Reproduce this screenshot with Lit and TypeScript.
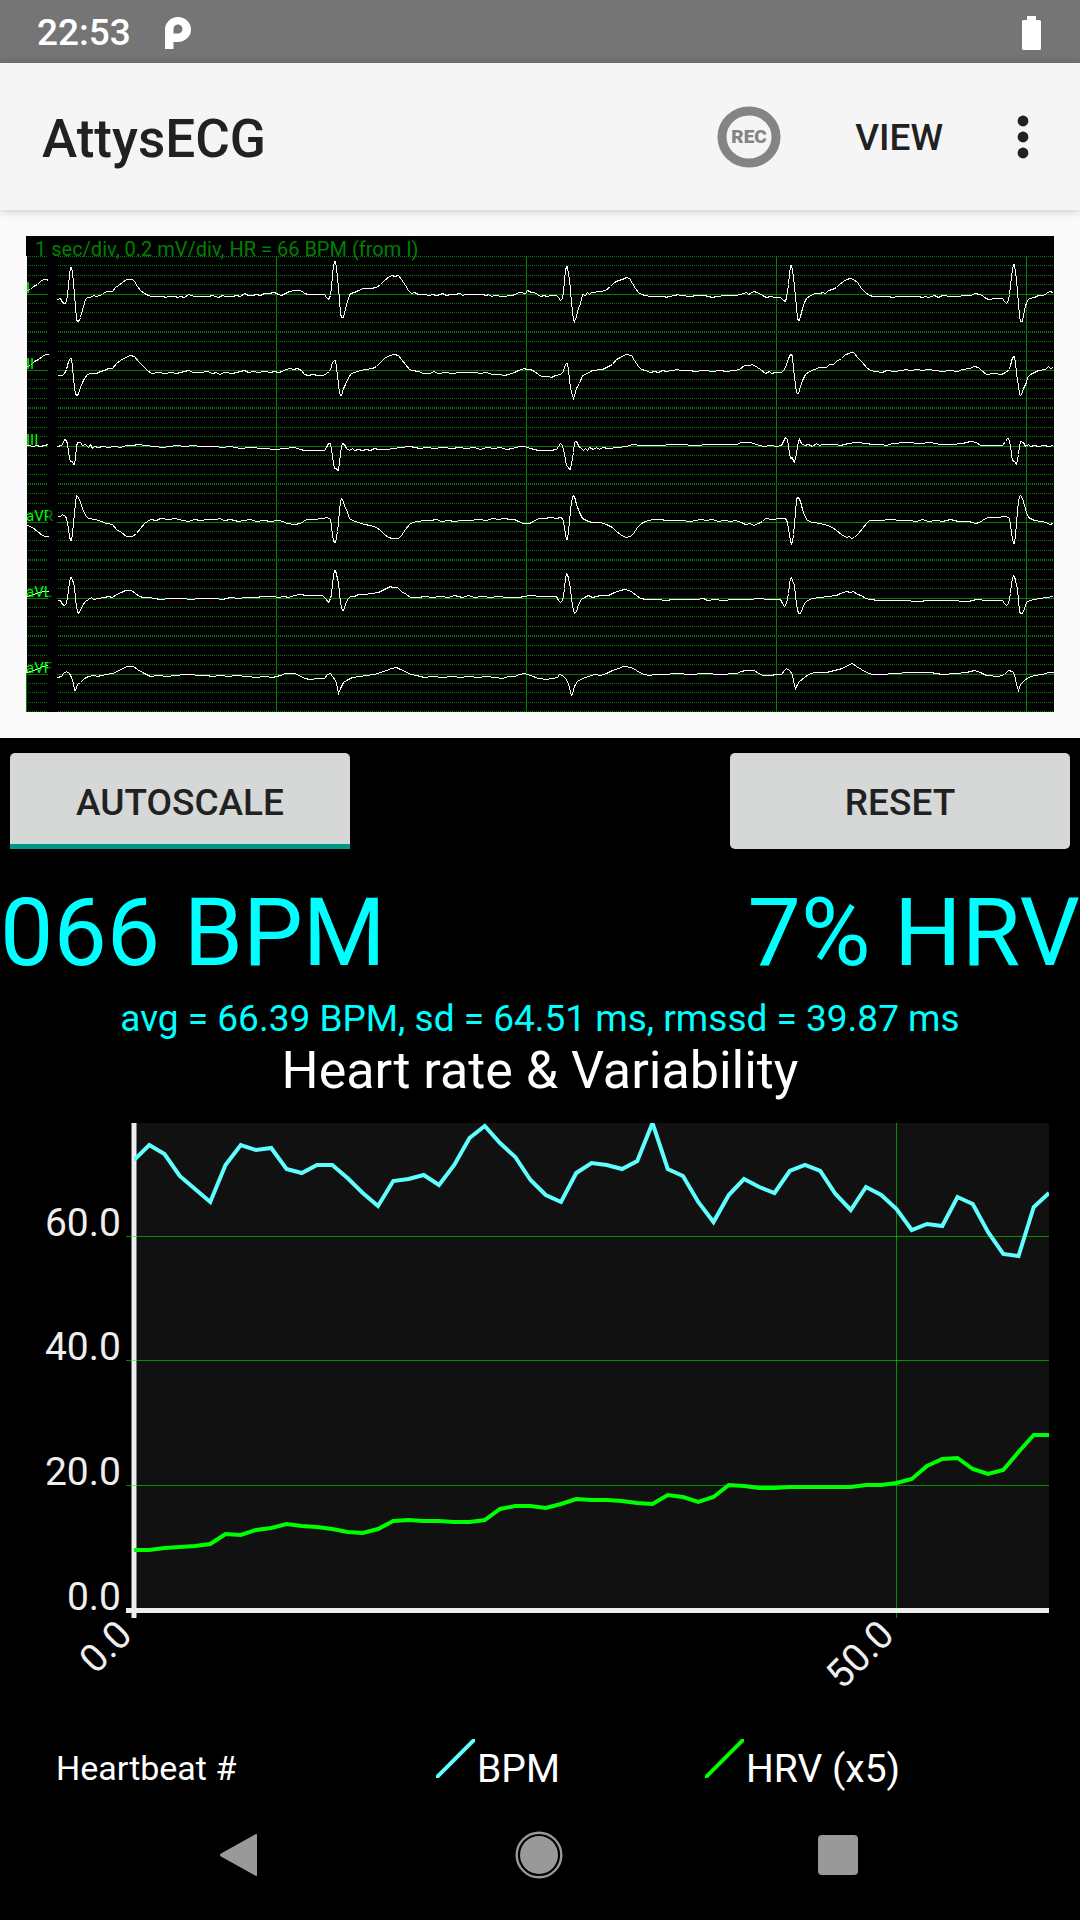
import { LitElement, html, svg, css } from "lit";
import { customElement, property, state } from "lit/decorators.js";

interface Lead {
  name: string;
  /** Sweeps separated by "|"; each point is "x height-above-baseline". */
  trace: string;
}

const LEADS: Lead[] = [
  {
    name: "I",
    trace:
      "27 4,30 5,33 8,37 10,40 13,43 15,46 15,48 14|57 -5,60 -4,62 -8,64 -9,66 -8,67 0,68 9,69 20,70 27,71 27,72 22,73 12,74 0,75 -12,76 -25,77 -27,79 -26,80 -23,81 -19,83 -12,85 -5,87 -3,90 -3,93 -1,96 -2,99 -1,102 0,104 2,107 3,112 3,115 7,118 9,122 12,126 15,132 15,134 13,137 8,140 4,144 1,148 -1,151 -2,163 -2,165 -3,168 -2,175 -2,177 -3,180 -2,184 -3,188 0,194 -2,208 -2,212 -1,218 -3,222 -1,225 -2,232 -2,236 -1,240 -2,244 1,248 -1,252 -1,256 0,260 -1,264 1,268 1,274 2,276 1,278 0,281 -1,285 1,289 3,294 4,299 4,302 3,304 1,308 0,324 0,326 -3,328 -5,330 -1,331 7,332 20,333 28,334 33,335 33,336 27,338 7,339 -6,340 -19,341 -23,343 -23,345 -14,347 -7,349 -1,350 1,354 2,358 4,363 6,370 6,376 7,380 10,384 14,389 18,392 19,394 18,398 19,401 15,405 9,408 4,411 1,414 2,418 0,424 0,429 -1,432 0,436 -1,440 0,442 1,446 -1,450 0,454 0,460 1,462 -1,465 0,482 0,486 -1,488 0,491 -2,494 -1,502 -2,512 -1,514 0,519 2,525 1,527 4,531 2,534 2,537 0,540 -2,544 -1,546 -2,552 -1,556 -1,558 -3,560 -6,562 -4,563 3,564 14,565 24,566 28,567 28,568 20,569 16,570 3,571 -8,572 -17,573 -25,574 -27,576 -22,578 -14,580 -9,582 0,585 -1,587 2,589 0,591 2,600 3,605 4,610 8,614 12,618 14,622 15,626 17,629 16,632 11,635 6,638 2,641 0,645 -1,650 -2,664 -2,666 -3,668 -2,675 -1,677 0,680 -1,690 -2,696 -1,704 -1,712 -3,716 -2,726 -1,735 -1,740 0,743 1,746 2,748 0,750 1,753 3,757 2,762 -1,766 -3,770 -2,775 -3,780 -3,783 -6,785 -7,786 -3,787 3,788 10,789 20,790 29,791 29,792 24,793 18,794 8,795 -2,796 -12,797 -24,798 -26,799 -26,800 -22,802 -14,804 -8,806 -4,810 -1,815 1,820 1,822 2,825 1,828 4,832 5,836 7,839 10,843 13,846 15,850 16,853 15,857 12,861 6,865 2,869 -1,873 -2,888 -2,892 -3,898 -2,918 -2,922 -3,925 -2,928 -3,934 -1,938 -3,942 -1,950 -2,958 -2,963 -1,970 -1,975 1,979 0,982 -1,984 -3,988 -5,995 -4,1002 -4,1004 -7,1006 -9,1008 -6,1009 0,1010 9,1011 18,1012 25,1013 30,1014 30,1015 22,1016 15,1017 3,1018 -10,1019 -21,1020 -27,1022 -27,1023 -21,1025 -11,1026 -9,1027 -6,1029 -4,1034 -3,1038 -1,1043 -1,1046 1,1049 3,1053 2",
  },
  {
    name: "II",
    trace:
      "27 4,30 5,34 9,38 11,42 14,45 16,48 16|57 -5,62 -5,64 -3,66 1,67 5,68 9,70 12,71 12,72 3,73 -8,74 -17,75 -23,76 -25,77 -25,78 -23,80 -17,82 -12,84 -8,87 -4,90 -3,96 -3,100 -1,104 0,108 2,112 2,116 7,120 10,125 13,130 15,134 14,138 9,143 4,147 0,151 -3,158 -2,165 -3,170 -2,176 -3,180 -2,184 -1,188 0,193 -2,200 -2,207 -1,212 -3,216 -2,219 -4,224 -2,232 -3,240 -1,244 0,248 -2,253 -1,258 -2,264 -1,270 -2,274 -1,278 -2,282 -1,285 1,290 2,293 1,297 2,301 0,304 -4,308 -5,312 -4,318 -5,323 -5,326 -3,329 -1,331 4,332 8,334 10,335 10,336 3,337 -5,338 -14,339 -22,340 -25,341 -25,343 -18,345 -14,348 -7,351 -3,357 -1,360 0,366 1,372 2,376 4,380 8,384 12,389 15,394 16,398 15,401 11,405 6,409 1,412 0,418 -1,423 -3,430 -3,433 -1,438 -3,445 -2,452 -3,460 -2,474 -2,480 -3,486 -2,492 -4,498 -4,504 -5,508 -4,514 -2,518 0,524 2,526 1,530 1,534 -1,538 -4,541 -6,548 -6,551 -7,555 -5,560 -4,563 -1,564 4,566 7,567 7,568 0,569 -8,570 -18,572 -25,573 -28,574 -25,576 -18,579 -13,582 -5,587 -3,592 0,602 1,606 3,612 6,616 11,620 13,625 16,631 15,634 10,638 4,641 1,645 0,650 -2,654 -1,658 -2,662 0,666 -1,672 0,677 1,680 0,690 0,694 -1,704 0,712 -1,720 0,726 -1,734 0,739 1,744 5,749 5,752 6,757 3,760 1,765 -3,769 -1,771 -3,775 -2,781 -2,784 1,786 6,788 12,790 16,791 16,792 14,793 2,794 -6,795 -15,796 -22,797 -23,798 -23,800 -16,802 -10,805 -4,809 -1,814 1,819 3,826 3,829 6,833 6,836 9,841 12,845 16,849 17,850 18,853 18,858 12,862 8,866 3,870 0,875 -1,882 -2,886 0,894 -1,902 0,905 1,910 0,917 1,922 0,928 1,934 0,942 -1,950 0,957 -1,962 1,969 2,974 4,978 3,981 0,986 -4,994 -3,1001 -4,1005 -2,1009 1,1010 5,1012 13,1014 14,1015 8,1016 -3,1018 -15,1019 -24,1020 -25,1021 -24,1023 -18,1026 -12,1027 -7,1030 -4,1034 -2,1038 0,1045 1,1048 4,1050 2,1053 3",
  },
  {
    name: "III",
    trace:
      "27 1,33 0,36 1,40 0,44 1,48 2|57 0,61 1,63 4,64 7,66 6,67 2,68 -5,69 -12,70 -15,72 -15,73 -18,74 -18,75 -12,76 0,77 4,80 4,82 1,85 2,88 -1,90 2,92 -2,94 0,98 -1,102 0,108 -1,114 0,120 -1,126 1,132 1,138 2,145 1,154 0,162 -1,170 0,176 1,185 0,192 1,200 0,214 0,222 -1,230 0,240 -2,250 -1,262 -2,276 -3,284 -2,294 -1,300 -3,304 -4,324 -4,326 -1,328 3,330 3,331 -4,332 -9,333 -17,334 -22,336 -22,337 -24,338 -24,339 -16,340 -8,341 0,342 3,344 2,346 -2,349 -4,352 -2,354 -4,358 -3,362 -4,366 -3,370 -4,374 -2,378 -3,386 -3,394 -2,400 -1,410 0,414 -1,420 -2,426 -1,434 -2,442 -1,452 -2,458 -1,466 -2,474 -1,480 -3,486 -1,494 -2,500 -1,506 -3,512 -2,519 0,524 0,530 -2,538 -4,550 -4,556 -3,558 0,560 3,562 1,564 -8,566 -19,568 -21,569 -23,570 -23,571 -17,573 -6,574 4,575 5,577 4,578 0,580 -1,583 -4,585 -2,587 -4,589 -1,593 -3,596 -1,599 -3,602 -1,608 -2,618 -1,626 0,632 2,640 1,662 1,670 2,680 2,694 1,710 2,736 2,741 4,750 4,756 2,763 0,770 1,776 0,781 1,783 5,785 9,787 7,788 0,789 -6,790 -12,792 -11,793 -15,794 -16,795 -12,796 -7,797 0,798 5,799 7,801 3,804 1,808 2,812 0,816 3,819 1,822 2,834 2,840 1,848 3,856 4,866 3,872 2,880 2,886 1,892 3,906 4,920 3,930 4,940 2,952 2,962 3,970 5,976 4,980 1,1002 1,1005 5,1007 8,1008 8,1010 1,1011 -8,1012 -14,1014 -15,1016 -18,1017 -14,1018 -8,1019 0,1020 5,1023 4,1025 0,1028 2,1030 0,1034 1,1038 0,1044 1,1048 0,1053 1",
  },
  {
    name: "aVR",
    trace:
      "27 -3,32 -5,37 -9,42 -13,45 -14,48 -14|57 6,60 6,62 8,65 6,66 4,67 0,68 -7,69 -14,70 -18,71 -18,72 -12,73 0,74 9,75 19,76 27,77 26,79 23,80 20,82 14,85 7,88 4,95 3,101 1,106 -1,112 -2,116 -7,121 -10,126 -14,132 -14,136 -11,140 -6,144 -1,150 3,156 2,160 4,168 3,175 4,182 2,188 1,194 3,200 2,208 3,216 3,219 4,224 2,230 3,238 1,244 2,250 3,256 1,264 2,270 1,278 2,283 1,286 -1,294 -2,300 -1,303 1,306 3,314 3,322 4,327 5,330 3,331 -4,332 -12,333 -18,334 -20,335 -20,337 -9,338 0,339 12,340 21,341 24,342 23,344 17,347 10,349 4,352 2,358 0,364 -2,370 -3,376 -5,380 -8,384 -12,388 -15,392 -16,398 -16,401 -13,405 -7,409 -2,412 0,418 1,423 2,430 2,436 3,441 1,448 2,454 1,462 2,470 2,478 3,486 2,492 4,498 3,504 4,510 3,514 3,518 1,523 -1,529 -1,533 1,538 4,544 4,550 5,556 4,560 5,562 4,563 1,564 -5,565 -12,566 -17,567 -17,568 -8,569 0,570 12,571 20,572 25,573 27,574 26,576 18,579 10,582 4,588 1,592 0,600 0,606 -2,612 -5,616 -9,620 -12,625 -15,630 -14,633 -11,637 -5,641 -1,645 1,652 3,660 3,666 2,680 2,690 1,700 3,706 2,712 3,718 1,724 2,730 1,735 2,741 0,745 -2,750 -1,753 -3,758 -1,762 1,765 4,772 3,780 4,785 4,787 0,788 -6,789 -12,790 -19,791 -21,792 -19,793 -12,794 -2,795 10,796 23,797 25,798 25,800 21,802 13,804 7,807 2,812 0,820 -1,827 -3,832 -5,836 -8,841 -12,846 -15,849 -14,851 -16,854 -15,858 -11,862 -6,866 -1,869 2,880 2,890 3,900 2,908 2,916 1,922 3,928 1,936 2,942 1,950 3,958 1,968 1,972 0,975 -1,979 0,982 2,987 5,996 5,1006 6,1009 4,1010 -2,1011 -10,1012 -16,1013 -21,1014 -21,1015 -12,1016 -2,1017 12,1018 20,1019 26,1020 27,1022 24,1024 17,1026 10,1028 5,1034 2,1040 1,1046 0,1049 -2,1053 -1",
  },
  {
    name: "aVL",
    trace:
      "27 2,33 4,39 6,44 7,48 7|57 -2,60 -2,62 -6,64 -7,66 -5,67 1,68 8,69 16,70 21,71 21,72 18,73 16,74 11,75 0,76 -8,77 -13,78 -15,80 -12,82 -7,85 -3,88 -1,91 1,93 -1,98 0,104 1,108 2,112 1,116 4,121 6,125 8,131 8,135 5,139 2,143 1,148 1,154 0,160 -1,170 0,182 0,190 -1,200 0,214 0,222 -1,230 1,238 0,246 1,256 1,262 2,272 2,278 1,284 2,288 1,294 3,300 4,306 3,322 3,325 0,328 -4,330 0,331 4,332 15,333 22,334 28,335 28,336 24,337 20,338 16,339 5,340 -3,341 -9,342 -12,343 -12,345 -6,347 -1,350 2,354 2,358 4,364 4,372 5,378 6,382 8,386 10,390 12,392 11,397 11,401 7,406 4,410 1,418 1,424 2,432 1,440 2,448 1,454 3,462 1,468 3,474 1,482 2,490 1,498 2,506 1,518 1,524 2,530 3,540 2,556 2,558 -2,560 -4,562 -2,563 3,564 10,565 20,566 25,567 24,568 20,569 16,570 10,571 0,572 -7,573 -12,574 -15,576 -13,578 -6,581 -1,584 1,588 3,592 1,600 3,608 3,614 6,620 8,624 9,629 8,632 6,636 3,640 0,646 -1,656 -1,666 -2,672 -1,696 -1,703 0,707 -2,714 -1,722 -2,734 -1,750 -1,758 0,768 -1,780 -1,782 -5,784 -8,786 -5,787 -1,788 5,789 14,790 20,791 21,792 18,794 13,795 3,796 -5,797 -11,798 -15,800 -15,802 -10,804 -5,807 -2,812 0,820 1,828 2,836 3,840 5,846 7,850 6,853 7,857 4,861 3,865 0,870 -1,878 -2,900 -2,920 -3,926 -2,948 -2,968 -3,976 -1,986 -2,1002 -2,1004 -5,1006 -7,1008 -5,1009 0,1010 5,1011 15,1012 20,1013 23,1014 22,1015 18,1017 10,1018 -2,1019 -13,1020 -15,1022 -15,1024 -10,1026 -4,1029 -2,1034 -1,1040 0,1046 1,1053 2",
  },
  {
    name: "aVF",
    trace:
      "27 2,33 4,38 6,43 8,48 9|57 -3,61 -2,63 1,66 3,69 1,71 -3,73 -9,74 -16,75 -16,77 -10,80 -8,84 -4,88 -2,94 -1,97 -2,101 -1,106 0,112 1,117 3,122 6,127 8,133 8,137 5,142 2,146 0,150 -2,158 -1,166 -2,176 -1,184 0,190 0,198 -1,206 -1,212 -2,220 -1,228 -2,236 -1,246 -2,256 -3,264 -2,272 -3,280 -1,285 1,294 1,299 -1,304 -4,310 -5,318 -4,324 -4,327 0,330 1,332 -2,335 -6,337 -13,338 -19,340 -14,343 -8,348 -5,352 -3,360 -2,366 -1,374 0,380 2,386 4,391 6,396 7,400 5,405 3,410 0,416 -1,424 -3,432 -2,442 -3,452 -2,460 -3,468 -2,478 -3,486 -2,494 -3,502 -4,508 -2,514 -2,519 0,524 1,530 -1,538 -4,546 -5,552 -4,557 -3,559 0,562 -1,565 -4,568 -9,570 -18,571 -21,572 -20,574 -12,577 -7,582 -4,588 -2,594 0,600 -1,606 1,612 4,618 6,623 8,631 7,636 4,641 1,648 -1,656 0,664 0,676 1,690 0,704 1,720 0,736 1,741 3,745 4,754 4,758 1,763 -1,770 -1,776 0,781 0,784 4,786 6,789 4,792 0,793 -7,795 -14,797 -10,799 -7,804 -3,808 0,814 2,826 2,834 4,842 6,847 9,852 11,856 8,861 5,866 2,872 0,884 0,892 1,912 2,930 2,942 0,956 1,966 2,974 4,980 2,986 -1,998 -2,1004 0,1008 4,1012 3,1014 0,1016 -10,1018 -16,1020 -10,1024 -6,1028 -3,1034 -1,1042 0,1048 2,1053 2",
  },
];

const LEAD_TOP = 294;
const LEAD_PITCH = 76;
const DIVISIONS = [-38, -29, -19, -10, 9, 18, 28, 37];
const SECOND_MARKS = [276, 526, 776, 1026];

@customElement("ecg-plot")
export class EcgPlot extends LitElement {
  @property() caption = "";

  static styles = css`
    :host { display: block; }
    .plot { display: block; width: 100%; height: auto; }
    .crisp { shape-rendering: crispEdges; }
    .dots { stroke: #008000; stroke-dasharray: 1 1; }
    .line { stroke: #008000; }
    .trace { fill: none; stroke: #ffffff; stroke-width: 1; }
    .caption { font: 400 20px Roboto, sans-serif; fill: #008000; }
    .label { font: 400 15px Roboto, sans-serif; fill: url(#label-fade); }
  `;

  private lead(lead: Lead, index: number) {
    const y = LEAD_TOP + index * LEAD_PITCH + 0.5;
    const sweeps = lead.trace.split("|").map((sweep) =>
      sweep
        .split(",")
        .map((point) => {
          const [x, h] = point.split(" ").map(Number);
          return `${x + 0.5},${y - h}`;
        })
        .join(" ")
    );
    return svg`
      <g class="crisp">
        ${DIVISIONS.map((d) => svg`
          <line class="dots" x1="28" x2="48" y1=${y + d} y2=${y + d}></line>
          <line class="dots" x1="58" x2="1054" y1=${y + d} y2=${y + d}></line>`)}
        <line class="line" x1="27" x2="48" y1=${y} y2=${y}></line>
        <line class="line" x1="57" x2="1054" y1=${y} y2=${y}></line>
        ${sweeps.map((points) => svg`<polyline class="trace" points=${points}></polyline>`)}
      </g>
      <text class="label" x="26" y=${y - 2}>${lead.name}</text>`;
  }

  render() {
    return html`
      <svg class="plot" viewBox="26 236 1028 476" role="img" aria-label="ECG leads">
        <defs>
          <linearGradient id="label-fade" gradientUnits="userSpaceOnUse" x1="0" x2="96" y1="0" y2="0">
            <stop offset="0.5" stop-color="#00ff00"></stop>
            <stop offset="0.5" stop-color="#008000"></stop>
          </linearGradient>
        </defs>
        <rect x="26" y="236" width="1028" height="20" fill="#000"></rect>
        <rect x="27" y="256" width="1027" height="456" fill="#000"></rect>
        <g class="crisp">
          ${SECOND_MARKS.map((x) => svg`<line class="line" x1=${x + 0.5} x2=${x + 0.5} y1="256" y2="712"></line>`)}
          <line class="line" x1="26.5" x2="26.5" y1="673" y2="712"></line>
        </g>
        ${LEADS.map((lead, i) => this.lead(lead, i))}
        <text class="caption" x="35" y="256">${this.caption}</text>
      </svg>`;
  }
}

const BPM = [
  1160, 1145, 1154, 1176, 1189, 1202, 1165, 1145, 1150, 1148, 1169, 1173, 1165, 1165, 1178, 1193, 1206, 1181, 1179, 1175,
  1185, 1165, 1138, 1126, 1143, 1157, 1180, 1195, 1202, 1173, 1163, 1165, 1169, 1161, 1123, 1169, 1176, 1202, 1222, 1195,
  1179, 1187, 1193, 1171, 1165, 1171, 1194, 1210, 1187, 1195, 1209, 1230, 1224, 1226, 1197, 1204, 1232, 1254, 1256, 1207,
  1193,
];
const HRV = [
  1550, 1550, 1548, 1547, 1546, 1544, 1534, 1535, 1530, 1528, 1524, 1526, 1527, 1529, 1532, 1533, 1529, 1521, 1520, 1521,
  1521, 1522, 1522, 1520, 1509, 1506, 1506, 1508, 1504, 1499, 1500, 1500, 1501, 1503, 1504, 1495, 1497, 1502, 1497, 1485,
  1486, 1488, 1488, 1487, 1487, 1487, 1487, 1487, 1485, 1485, 1483, 1479, 1466, 1459, 1458, 1469, 1474, 1470, 1452, 1435,
  1435,
];
const Y_TICKS = [
  { label: "60.0", y: 1236 },
  { label: "40.0", y: 1360 },
  { label: "20.0", y: 1485 },
  { label: "0.0", y: 1610 },
];
const X_TICKS = [
  { label: "0.0", x: 134 },
  { label: "50.0", x: 896 },
];

@customElement("trend-chart")
export class TrendChart extends LitElement {
  static styles = css`
    :host { display: block; }
    .chart { display: block; width: 100%; height: auto; }
    .grid { stroke: #00ff00; stroke-opacity: 0.53; }
    .axis { stroke: #eeeeee; stroke-width: 5; }
    .tick { font: 400 39px Roboto, sans-serif; fill: #eeeeee; text-anchor: end; }
    .series { fill: none; stroke-width: 4; }
    .bpm { stroke: #60ffff; }
    .hrv { stroke: #00ff00; }
  `;

  private points(values: number[]) {
    return values.map((y, i) => `${134 + i * 15.25},${y}`).join(" ");
  }

  render() {
    return html`
      <svg class="chart" viewBox="0 1101 1080 638" role="img" aria-label="Heart rate and variability per heartbeat">
        <clipPath id="area"><rect x="134" y="1123" width="915" height="490"></rect></clipPath>
        <rect x="134" y="1123" width="915" height="487" fill="#111111"></rect>
        <line class="axis" x1="134" x2="134" y1="1123" y2="1618"></line>
        ${Y_TICKS.map((t) => svg`<line class="grid" x1="126" x2="1049" y1=${t.y + 0.5} y2=${t.y + 0.5}></line>`)}
        <line class="grid" x1="896.5" x2="896.5" y1="1123" y2="1618"></line>
        <line class="axis" x1="126" x2="1049" y1="1610.5" y2="1610.5"></line>
        <g clip-path="url(#area)">
          <polyline class="series bpm" points=${this.points(BPM)}></polyline>
          <polyline class="series hrv" points=${this.points(HRV)}></polyline>
        </g>
        ${Y_TICKS.map((t) => svg`<text class="tick" x="121" y=${t.y}>${t.label}</text>`)}
        ${X_TICKS.map((t) => svg`<text class="tick" transform="translate(${t.x} 1637) rotate(-45)">${t.label}</text>`)}
      </svg>`;
  }
}

@customElement("app-root")
export class AppRoot extends LitElement {
  @state() private autoscale = true;

  static styles = css`
    :host {
      display: block;
      min-height: 100vh;
      background: #000;
      font-family: Roboto, sans-serif;
    }
    button {
      font: inherit;
      color: inherit;
      border: 0;
      padding: 0;
      background: none;
      cursor: pointer;
    }
    svg { display: block; }
    h1, h2, p { margin: 0; }
    .status {
      display: flex;
      align-items: center;
      gap: 34px;
      height: 63px;
      box-sizing: border-box;
      padding: 2px 39px 0 37px;
      background: #757575;
      color: #fff;
      font-size: 37px;
      font-weight: 500;
    }
    .battery { margin-left: auto; }
    .appbar {
      position: relative;
      display: flex;
      align-items: center;
      height: 147px;
      box-sizing: border-box;
      padding: 0 39px 0 42px;
      background: #f5f5f5;
      color: #212121;
      box-shadow: 0 1px 8px rgba(0, 0, 0, 0.22);
    }
    .title {
      flex: 1;
      padding-top: 4px;
      font-size: 53px;
      font-weight: 500;
    }
    .actions {
      display: flex;
      align-items: center;
      font-size: 37px;
      font-weight: 500;
    }
    .view { padding: 2px 62px 0 74px; }
    .rec-text {
      font: 900 19px Roboto, sans-serif;
      fill: #848484;
      text-anchor: middle;
    }
    .ecg {
      padding: 26px;
      background: #fafafa;
    }
    .controls {
      display: flex;
      justify-content: space-between;
      padding: 15px 10px 28px;
    }
    .control {
      width: 340px;
      height: 96px;
      padding-top: 2px;
      border-radius: 5px;
      background: #d6d7d7;
      color: #212121;
      font-size: 37px;
      font-weight: 500;
    }
    .toggle {
      border-radius: 5px 5px 0 0;
    }
    .toggle[aria-pressed="true"] {
      box-shadow: inset 0 -5px #009688;
    }
    .readings {
      display: flex;
      justify-content: space-between;
      padding-bottom: 8px;
      color: #00ffff;
      font-size: 95px;
      line-height: 112px;
    }
    .summary {
      color: #00ffff;
      font-size: 37px;
      line-height: 43px;
      text-align: center;
    }
    .chart-title {
      color: #fff;
      font-size: 52px;
      font-weight: 400;
      line-height: 61px;
      text-align: center;
    }
    .legend {
      display: grid;
      grid-template-columns: 380fr 269fr 375fr;
      align-items: end;
      height: 53px;
      padding-left: 56px;
      color: #fff;
      font-size: 39px;
      line-height: 46px;
    }
    .domain {
      font-size: 34px;
      line-height: 48px;
    }
    .key {
      display: flex;
      align-items: flex-end;
      height: 53px;
      gap: 2px;
    }
    .swatch { align-self: flex-start; }
    .nav {
      display: grid;
      grid-template-columns: repeat(3, 1fr);
      height: 126px;
      padding: 0 93px 0 90px;
    }
    .nav-button {
      display: flex;
      align-items: center;
      justify-content: center;
    }
  `;

  render() {
    return html`
      <div class="status">
        <span>22:53</span>
        <svg width="26" height="32" viewBox="0 0 26 32" aria-hidden="true">
          <path fill="#fff" fill-rule="evenodd" d="M0 32V12.5A13 12.5 0 0 1 13 0A13 12.5 0 0 1 13 25H8.5V32ZM8.5 16.5V12A4.5 4.5 0 1 1 13 16.5Z"></path>
        </svg>
        <svg class="battery" width="19" height="34" viewBox="0 0 19 34" aria-hidden="true">
          <path fill="#fff" d="M5 0H14V4H17.5Q19 4 19 5.5V32.5Q19 34 17.5 34H1.5Q0 34 0 32.5V5.5Q0 4 1.5 4H5Z"></path>
        </svg>
      </div>
      <header class="appbar">
        <h1 class="title">AttysECG</h1>
        <div class="actions">
          <button aria-label="Record">
            <svg width="64" height="62" viewBox="0 0 64 62">
              <ellipse cx="32" cy="31" rx="27" ry="26" fill="none" stroke="#848484" stroke-width="9"></ellipse>
              <text class="rec-text" x="32" y="37">REC</text>
            </svg>
          </button>
          <button class="view">VIEW</button>
          <button aria-label="More options">
            <svg width="36" height="44" viewBox="0 0 36 44" fill="#212121">
              <circle cx="18" cy="6" r="5.4"></circle>
              <circle cx="18" cy="22" r="5.4"></circle>
              <circle cx="18" cy="38" r="5.4"></circle>
            </svg>
          </button>
        </div>
      </header>
      <section class="ecg">
        <ecg-plot caption="1 sec/div, 0.2 mV/div, HR = 66 BPM (from I)"></ecg-plot>
      </section>
      <div class="controls">
        <button
          class="control toggle"
          aria-pressed=${this.autoscale ? "true" : "false"}
          @click=${() => (this.autoscale = !this.autoscale)}
        >AUTOSCALE</button>
        <button class="control">RESET</button>
      </div>
      <div class="readings">
        <span>066 BPM</span>
        <span>7% HRV</span>
      </div>
      <p class="summary">avg = 66.39 BPM, sd = 64.51 ms, rmssd = 39.87 ms</p>
      <h2 class="chart-title">Heart rate &amp; Variability</h2>
      <trend-chart></trend-chart>
      <div class="legend">
        <span class="domain">Heartbeat #</span>
        <span class="key">
          <svg class="swatch" width="39" height="39" viewBox="0 0 39 39" aria-hidden="true">
            <path d="M0 39L39 0" stroke="#60ffff" stroke-width="4"></path>
          </svg>
          BPM
        </span>
        <span class="key">
          <svg class="swatch" width="39" height="39" viewBox="0 0 39 39" aria-hidden="true">
            <path d="M0 39L39 0" stroke="#00ff00" stroke-width="4"></path>
          </svg>
          HRV (x5)
        </span>
      </div>
      <nav class="nav">
        <button class="nav-button" aria-label="Back">
          <svg width="42" height="44" viewBox="0 0 42 44">
            <path fill="#999" d="M36.500 1.200Q38 0.400 38 2V42Q38 43.600 36.500 42.800L2 23.500Q0 22 2 20.500Z"></path>
          </svg>
        </button>
        <button class="nav-button" aria-label="Home">
          <svg width="48" height="48" viewBox="0 0 48 48">
            <circle cx="24" cy="24" r="22.300" fill="none" stroke="#999" stroke-width="2.400"></circle>
            <circle cx="24" cy="24" r="19" fill="#999"></circle>
          </svg>
        </button>
        <button class="nav-button" aria-label="Recent apps">
          <svg width="40" height="40" viewBox="0 0 40 40">
            <rect width="40" height="40" rx="4" fill="#999"></rect>
          </svg>
        </button>
      </nav>`;
  }
}
